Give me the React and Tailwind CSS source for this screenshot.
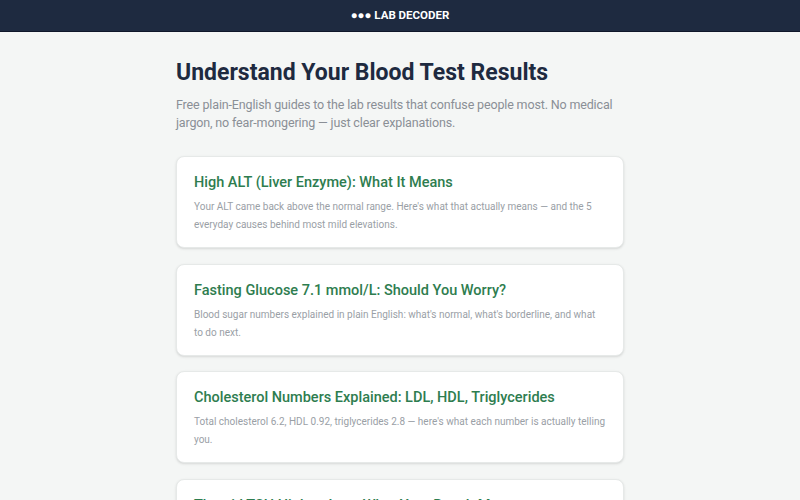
const posts = [
  {
    title: 'High ALT (Liver Enzyme): What It Means',
    text: "Your ALT came back above the normal range. Here's what that actually means — and the 5 everyday causes behind most mild elevations.",
  },
  {
    title: 'Fasting Glucose 7.1 mmol/L: Should You Worry?',
    text: "Blood sugar numbers explained in plain English: what's normal, what's borderline, and what to do next.",
  },
  {
    title: 'Cholesterol Numbers Explained: LDL, HDL, Triglycerides',
    text: "Total cholesterol 6.2, HDL 0.92, triglycerides 2.8 — here's what each number is actually telling you.",
  },
  {
    title: 'Thyroid TSH High or Low: What Your Result Means',
    text: 'A plain-English look at TSH, free T4 and the everyday reasons your thyroid numbers can drift.',
  },
];

export default function App() {
  return (
    <div className="h-screen overflow-hidden bg-[#f4f6f5] font-['Roboto',sans-serif]">
      <header className="h-8 bg-[#1e2a40] border-b border-[#0f172a] flex items-center justify-center">
        <span className="text-white text-[11.5px] font-bold">●●● LAB DECODER</span>
      </header>
      <main className="w-[448px] mx-auto pt-[26px]">
        <h1 className="text-[23px] font-bold text-[#1e2a40] leading-[30px]">
          Understand Your Blood Test Results
        </h1>
        <p className="mt-[8px] text-[12.5px] tracking-[-0.15px] leading-[18px] text-[#8a8f96]">
          Free plain-English guides to the lab results that confuse people most. No medical jargon, no fear-mongering — just clear explanations.
        </p>
        <div className="mt-[24px] flex flex-col gap-[15.5px]">
          {posts.map((p) => (
            <div
              key={p.title}
              className="bg-white border border-[#e6e9e8] rounded-lg shadow-sm px-[17px] pt-[15px] pb-[13px]"
            >
              <h2 className="text-[14.5px] leading-[22px] font-medium text-[#2e7d4f]">{p.title}</h2>
              <p className="mt-[4px] text-[10px] leading-[18px] text-[#9aa0a6]">{p.text}</p>
            </div>
          ))}
        </div>
      </main>
    </div>
  );
}
